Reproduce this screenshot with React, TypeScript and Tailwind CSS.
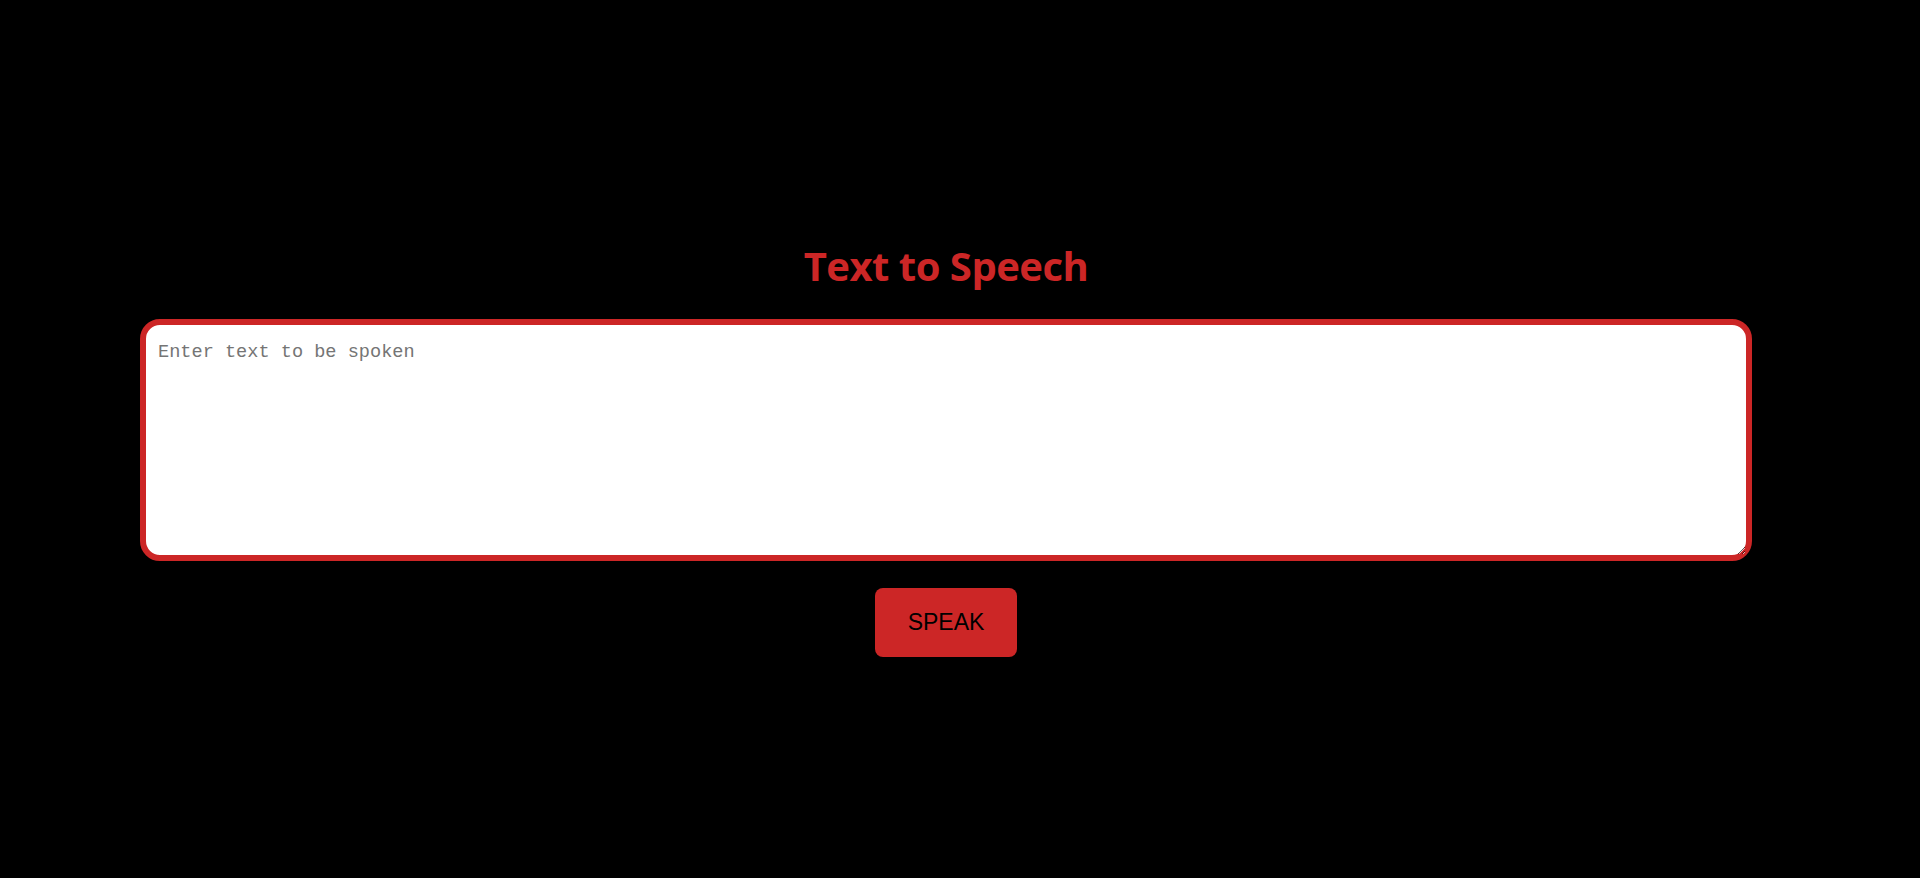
const App = () => {
  return (
    <div className="min-h-[878px] w-full bg-black flex flex-col items-center pt-[240px] pr-[28px]">
      <h1 className="text-[#cc2626] text-[40px] font-bold leading-[52px] font-['Open_Sans',sans-serif] tracking-[-0.5px]">
        Text to Speech
      </h1>
      <textarea
        placeholder="Enter text to be spoken"
        className="mt-[27px] w-[1612px] h-[242px] bg-white border-[6px] border-[#cc2626] rounded-[20px] px-[12px] pt-[14px] pb-[10px] text-[18.6px] font-['Liberation_Mono',monospace] text-black placeholder:text-[#757575] outline-none"
      />
      <button className="mt-[27px] w-[142px] h-[69px] rounded-[8px] bg-[#cc2626] text-black text-[23px] font-['Liberation_Sans',Arial,sans-serif]">
        SPEAK
      </button>
    </div>
  )
}

export default App
